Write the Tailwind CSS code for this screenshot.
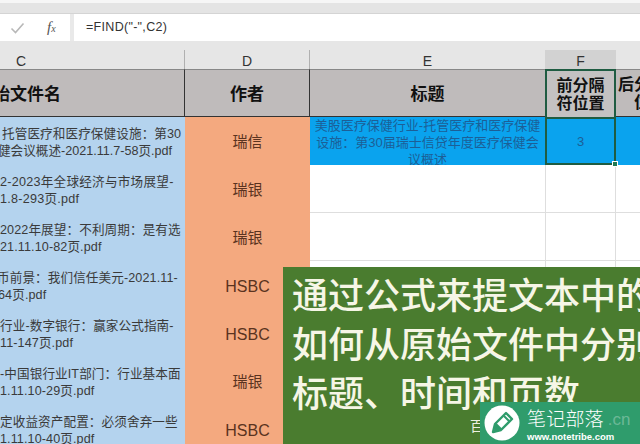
<!DOCTYPE html>
<html><head><meta charset="utf-8"><script src="https://cdn.jsdelivr.net/npm/@tailwindcss/browser@4"></script></head>
<body class="m-0">
<div class="relative w-[640px] h-[444px] overflow-hidden bg-white flex flex-col font-['Liberation_Sans','Noto_Sans_CJK_SC',sans-serif] text-[#333]">
  <div class="h-[3px] shrink-0 bg-[#f6f6f6]"></div>
  <div class="h-[11px] shrink-0 bg-[#e4e4e4] border-b border-[#d4d4d4]"></div>
  <div class="h-[27px] flex bg-[#e9e9e9] gap-[4px] shrink-0">
    <div class="w-[70px] bg-white flex items-center">
      <svg class="ml-[10px]" width="15" height="12" viewBox="0 0 15 12" fill="none"><path d="M1.5 6.5 L5.5 10.5 L13.5 1.5" stroke="#b8b8b8" stroke-width="1.6"/></svg>
      <span class="ml-[22px] text-[15px] leading-[14px] italic font-['Liberation_Serif',serif] text-[#555]">f<span class="text-[10px]">x</span></span>
    </div>
    <div class="flex-1 bg-white flex items-center pl-[12px] text-[12.5px] tracking-[0.3px] text-[#333]">=FIND("-",C2)</div>
  </div>
  <div class="grid grid-cols-[185px_125px_235px_71px_24px] grid-rows-[28px_48px_48px_48px_48px_48px_48px_48px_48px] shrink-0 bg-[#e6e6e6]">
    <div class="mt-[9px] flex items-end text-[14px] leading-[16px] pl-[16px] border-r border-[#b0b0b0]">C</div>
    <div class="mt-[9px] flex items-end justify-center text-[14px] leading-[16px] border-r border-[#b0b0b0]">D</div>
    <div class="mt-[9px] flex items-end justify-center text-[14px] leading-[16px]">E</div>
    <div class="mt-[9px] bg-[#d2d2d2] flex items-end justify-center text-[14px] leading-[16px]">F</div>
    <div class="mt-[9px]"></div>

    <div class="bg-[#bfbbbb] border-t border-t-[#888] border-b border-b-[#333] border-r border-r-[#333] overflow-hidden flex items-center font-bold text-[17px] text-[#111] whitespace-nowrap pt-[3px]"><span class="ml-[-7px]">始文件名</span></div>
    <div class="bg-[#bfbbbb] border-t border-t-[#888] border-b border-b-[#333] border-r border-r-[#333] flex items-center justify-center font-bold text-[17px] text-[#111] pt-[3px]">作者</div>
    <div class="bg-[#bfbbbb] border-t border-t-[#888] border-b border-b-[#333] flex items-center justify-center font-bold text-[17px] text-[#111] pt-[3px]">标题</div>
    <div class="bg-[#c4c2c2] border-2 border-b-0 border-[#1f5c42] flex items-center justify-center font-bold text-[16px] leading-[18px] text-center text-[#111] pt-[1px]">前分隔<br>符位置</div>
    <div class="bg-[#bfbbbb] border-t border-t-[#888] border-b border-b-[#333] overflow-hidden font-bold text-[16px] leading-[18px] text-[#111] whitespace-nowrap pt-[6px] pl-[2px]">后分隔<br><span class="ml-[16px]">位置</span></div>

    <div class="bg-[#b4d3ee] overflow-hidden whitespace-nowrap text-[12.6px] leading-[17px] text-[#3a3a3a] pt-[9px] pl-[2px] tracking-[0.1px]">托管医疗和医疗保健设施：第30<br><span class="ml-[-4px] tracking-[0px]">健会议概述-2021.11.7-58页.pdf</span></div>
    <div class="bg-[#f4a97f] flex items-center justify-center text-[15px] text-[#5a3320] pt-[3px]">瑞信</div>
    <div class="bg-[#0aa3ee] text-center text-[13px] leading-[17px] text-[#1c5f97] pt-[0px]">美股医疗保健行业-托管医疗和医疗保健<br>设施：第30届瑞士信贷年度医疗保健会<br>议概述</div>
    <div class="bg-[#0aa3ee] border-2 border-[#1f5c42] relative flex items-center justify-center text-[13px] text-[#1c5f97] pt-[2px]">3<span class="absolute right-[-4px] bottom-[-4px] w-[6px] h-[6px] bg-[#1f7a55] border border-white"></span></div>
    <div class="bg-[#0aa3ee]"></div>

    <div class="bg-[#b4d3ee] overflow-hidden whitespace-nowrap text-[12.6px] leading-[17px] text-[#3a3a3a] pt-[9px] tracking-[0.25px]">2-2023年全球经济与市场展望-<br>1.8-293页.pdf</div>
    <div class="bg-[#f4a97f] flex items-center justify-center text-[15px] text-[#5a3320] pt-[3px]">瑞银</div>
    <div class="bg-white border-b border-[#dedede]"></div>
    <div class="bg-white border-b border-x border-[#dedede]"></div>
    <div class="bg-white border-b border-[#dedede]"></div>

    <div class="bg-[#b4d3ee] overflow-hidden whitespace-nowrap text-[12.6px] leading-[17px] text-[#3a3a3a] pt-[9px] tracking-[0.1px]">2022年展望：不利周期：是有选<br>21.11.10-82页.pdf</div>
    <div class="bg-[#f4a97f] flex items-center justify-center text-[15px] text-[#5a3320] pt-[3px]">瑞银</div>
    <div class="bg-white border-b border-[#dedede]"></div>
    <div class="bg-white border-b border-x border-[#dedede]"></div>
    <div class="bg-white border-b border-[#dedede]"></div>

    <div class="bg-[#b4d3ee] overflow-hidden whitespace-nowrap text-[12.6px] leading-[17px] text-[#3a3a3a] pt-[9px] tracking-[0.1px]"><span class="ml-[-3px]">币前景：我们信任美元-2021.11-</span><br><span class="ml-[-2px]">64页.pdf</span></div>
    <div class="bg-[#f4a97f] flex items-center justify-center text-[16px] text-[#5a3320] pt-[3px]">HSBC</div>
    <div class="bg-white"></div><div class="bg-white border-x border-[#dedede]"></div><div class="bg-white"></div>

    <div class="bg-[#b4d3ee] overflow-hidden whitespace-nowrap text-[12.6px] leading-[17px] text-[#3a3a3a] pt-[9px] tracking-[0.1px]">行业-数字银行：赢家公式指南-<br>11-147页.pdf</div>
    <div class="bg-[#f4a97f] flex items-center justify-center text-[16px] text-[#5a3320] pt-[3px]">HSBC</div>
    <div class="bg-white"></div><div class="bg-white"></div><div class="bg-white"></div>

    <div class="bg-[#b4d3ee] overflow-hidden whitespace-nowrap text-[12.6px] leading-[17px] text-[#3a3a3a] pt-[9px] tracking-[0.1px]">-中国银行业IT部门：行业基本面<br>1.11.10-29页.pdf</div>
    <div class="bg-[#f4a97f] flex items-center justify-center text-[15px] text-[#5a3320] pt-[3px]">瑞银</div>
    <div class="bg-white"></div><div class="bg-white"></div><div class="bg-white"></div>

    <div class="bg-[#b4d3ee] overflow-hidden whitespace-nowrap text-[12.6px] leading-[17px] text-[#3a3a3a] pt-[9px] tracking-[0.1px]">定收益资产配置：必须舍弃一些<br>1.11.10-40页.pdf</div>
    <div class="bg-[#f4a97f] flex items-center justify-center text-[16px] text-[#5a3320] pt-[3px]">HSBC</div>
    <div class="bg-white"></div><div class="bg-white"></div><div class="bg-white"></div>
  </div>

  <div class="absolute left-[283px] top-[267px] w-[357px] h-[177px] bg-[#4a7c2f] pl-[9px] pt-[5px] overflow-hidden whitespace-nowrap text-[36px] leading-[49px] font-medium text-[#f6f6e6]">通过公式来提文本中的<br>如何从原始文件中分别<br>标题、时间和页数</div>
  <div class="absolute left-[470px] top-[418px] text-[14px] leading-[16px] text-[#eef0e0]">百</div>

  <div class="absolute left-[480px] top-[402px] w-[160px] h-[42px] bg-[#2f9c6c] flex items-center">
    <svg class="ml-[4px] shrink-0" width="36" height="36" viewBox="0 0 36 36"><circle cx="18" cy="18" r="17.5" fill="#fff"/><path d="M9 27 L11 19 L22 8 L28 14 L17 25 Z" fill="none" stroke="#2f9c6c" stroke-width="2.4" stroke-linejoin="round"/><path d="M12 19 L17 24 L11 26 Z M20 11 L25 16" fill="#2f9c6c" stroke="#2f9c6c" stroke-width="2"/></svg>
    <div class="ml-[7px] pt-[5px] flex flex-col whitespace-nowrap">
      <div class="flex items-center">
        <span class="text-[19px] leading-[22px] tracking-[0.2px] text-white font-light">笔记部落</span>
        <span class="ml-[4px] text-[17px] leading-[22px] text-white/30">.cn</span>
      </div>
      <span class="text-[9.5px] leading-[11px] font-bold text-white">www.notetribe.com</span>
    </div>
  </div>
</div>
</body></html>
